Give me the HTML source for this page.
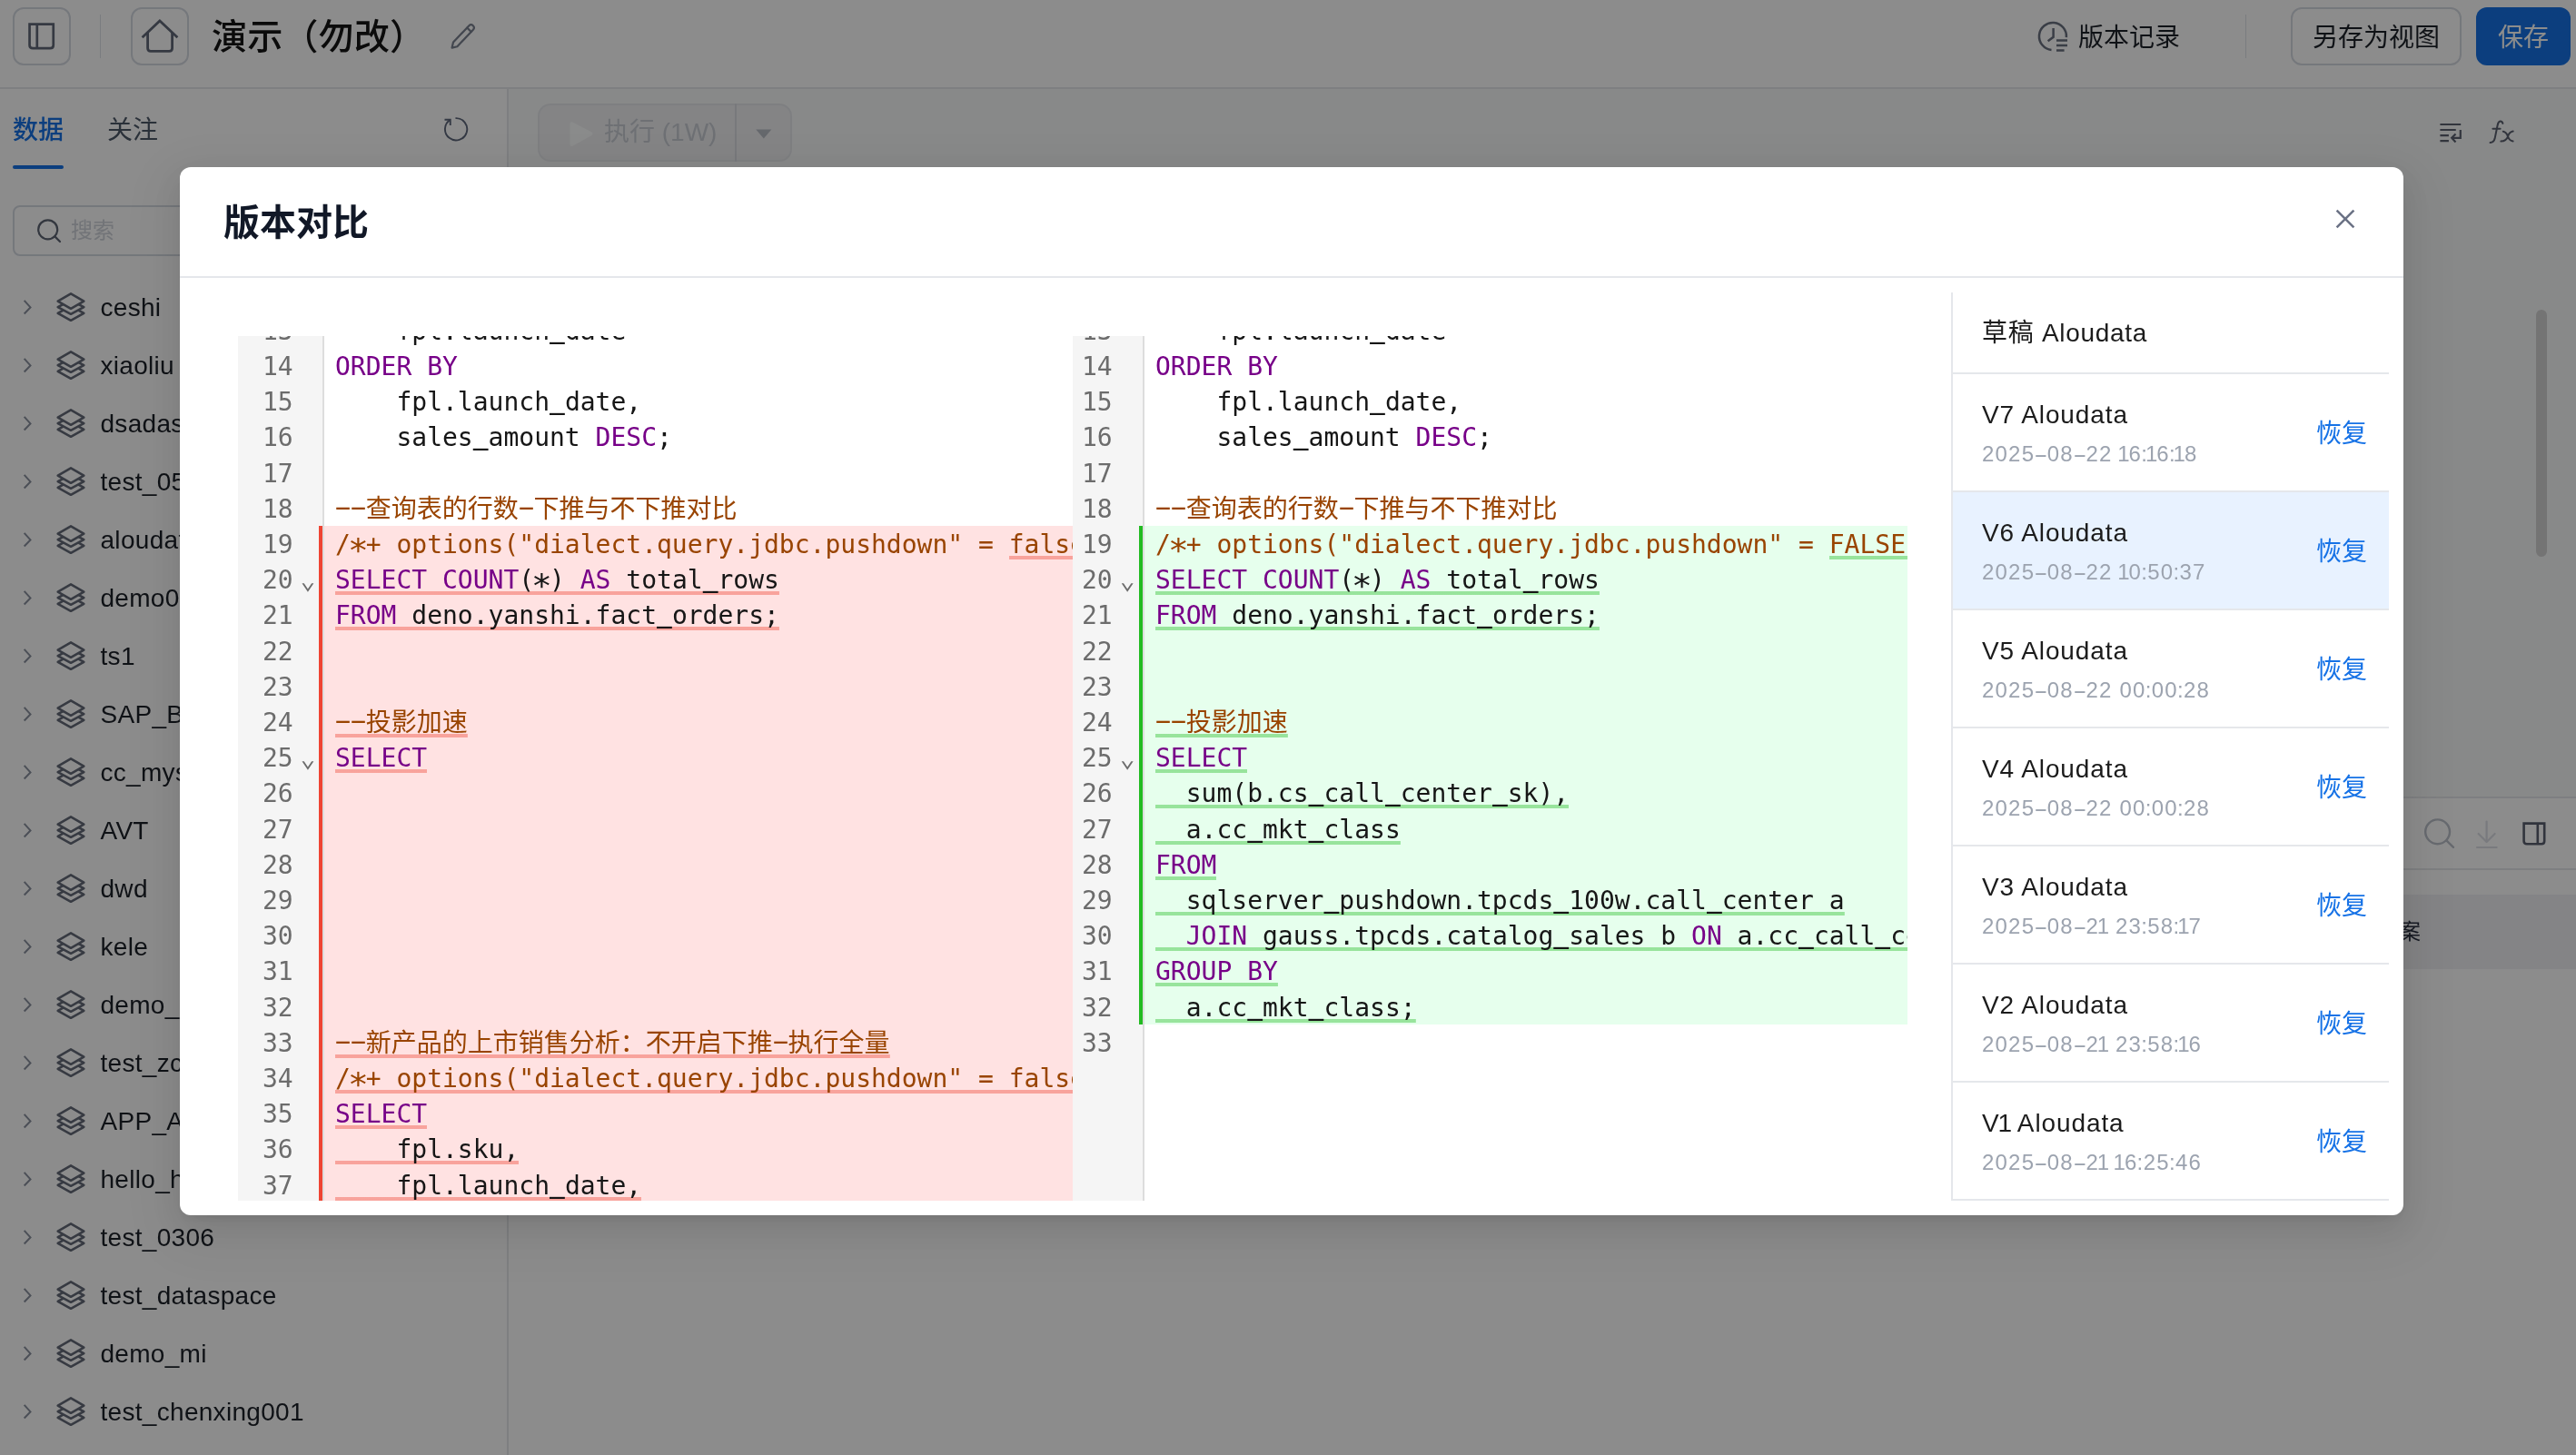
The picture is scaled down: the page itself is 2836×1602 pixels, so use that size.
<!DOCTYPE html>
<html lang="zh-CN">
<head>
<meta charset="utf-8">
<title>版本对比</title>
<style>
*{box-sizing:border-box;margin:0;padding:0}
html,body{width:2836px;height:1602px;overflow:hidden;background:#fff}
body{position:relative;will-change:transform;font-family:"Liberation Sans","Noto Sans CJK SC",sans-serif;color:#1d2129;font-size:28px}
.abs{position:absolute}
svg{display:block;overflow:visible}
/* ---------- app behind mask ---------- */
#hdr{position:absolute;left:0;top:0;width:2836px;height:98px;border-bottom:2px solid #e5e7ec;background:#fff}
.ibtn{position:absolute;top:8px;width:64px;height:64px;border:2px solid #d6dae2;border-radius:12px}
.vdiv{position:absolute;top:16px;width:1px;height:48px;background:#dfe2e8}
#title{position:absolute;left:233px;top:11px;line-height:60px;font-size:39.2px;font-weight:500;color:#151515;white-space:nowrap}
#verrec{position:absolute;left:2288px;top:22px;line-height:40px;font-size:28px;color:#1d2129;white-space:nowrap}
.btn{position:absolute;top:8px;height:64px;border-radius:12px;font-size:28px;line-height:64px;text-align:center;white-space:nowrap}
#saveas{left:2522px;width:188px;border:2px solid #d6dae2;color:#1d2129}
#save{left:2726px;width:104px;background:#1672e6;color:#fff;line-height:68px}
#side{position:absolute;left:0;top:98px;width:560px;height:1504px;border-right:2px solid #e5e7ec}
.tab{position:absolute;top:124px;line-height:40px;font-size:28px;white-space:nowrap}
#tab1{left:14px;color:#1672e6;font-weight:500}
#tab2{left:118px;color:#4e5969}
#tabline{position:absolute;left:14px;top:182px;width:56px;height:4px;border-radius:2px;background:#1672e6}
#search{position:absolute;left:14px;top:226px;width:530px;height:56px;border:2px solid #d6dae2;border-radius:8px}
#search span{position:absolute;left:62px;top:6px;line-height:40px;font-size:24px;color:#cfd3da}
.trow{position:absolute;left:0;width:556px;height:64px;white-space:nowrap}
.trow span{position:absolute;left:110.5px;top:12px;line-height:40px;font-size:28px;color:#1d2129;letter-spacing:0.3px}
.chev{position:absolute;left:24.4px;top:23px;width:12px;height:18px;fill:none;stroke:#8a919f;stroke-width:2;stroke-linecap:butt;stroke-linejoin:miter}
.lay{position:absolute;left:60px;top:14px;width:36px;height:36px;fill:#fff;stroke:#646b79;stroke-width:2.6;stroke-linejoin:round}
#exec{position:absolute;left:592px;top:114px;width:280px;height:64px;border:2px solid #e6e8ec;border-radius:14px;background:#f0f1f3}
#exec .sp{position:absolute;left:215px;top:-2px;width:2px;height:64px;background:#dadde2}
#exec span{position:absolute;left:71px;top:10px;line-height:40px;font-size:28px;color:#c9cdd4;white-space:nowrap;letter-spacing:0}
.hl{position:absolute;left:2560px;width:276px;height:2px;background:#e5e7ec}
#thead{position:absolute;left:2560px;top:985px;width:276px;height:82px;background:#f0f1f4}
#thead span{position:absolute;left:81px;top:21px;line-height:40px;font-size:24px;color:#2a3040}
#sthumb{position:absolute;left:2792px;top:341px;width:12px;height:272px;border-radius:6px;background:#d4d4d4}
/* ---------- mask + modal ---------- */
#mask{position:absolute;left:0;top:0;width:2836px;height:1602px;background:rgba(0,0,0,.45)}
#modal{position:absolute;left:198px;top:184px;width:2448px;height:1154px;border-radius:12px;background:#fff;
 box-shadow:0 12px 32px 0 rgba(0,0,0,.08),0 6px 12px -8px rgba(0,0,0,.12),0 18px 56px 16px rgba(0,0,0,.05)}
#mtitle{position:absolute;left:48px;top:31px;line-height:60px;font-size:40px;font-weight:700;color:#111827;white-space:nowrap}
#mhr{position:absolute;left:0;top:120px;width:2448px;height:2px;background:#e5e7eb}
/* editors: coordinates inside are relative to the editor box; the editor box is placed in body coords */
.ed{position:absolute;top:370px;width:919px;height:952px;overflow:hidden;background:#fff;
 font-family:"DejaVu Sans Mono","Noto Sans CJK SC",monospace;font-size:28px;line-height:39.2px;color:#161616}
.gut{position:absolute;left:0;top:0;height:952px;background:#f5f5f5;border-right:2px solid #ddd;box-sizing:content-box}
.ln{position:absolute;left:0;height:39.2px;text-align:right;color:#6c6c6c;white-space:pre}
.fold{position:absolute;height:39.2px;color:#6c6c6c;white-space:pre}
.mark{position:absolute;width:4px}
.chg{position:absolute;width:900px}
.cl{position:absolute;height:39.2px;padding-left:12px;white-space:pre}
.edl .mark{background:#ee4433}
.edr .mark{background:#22bb22}
.edl .chg{background:#ffe2e2}
.edr .chg{background:#e6ffed}
.cl i{font-style:normal;display:inline-block}
.hy{transform:translateY(-2.2px) scaleX(2.05)}
.as{transform:translateY(6.6px) scale(1.35,1.25)}
.us{transform-origin:50% 100%;transform:translateY(2.2px) scaleY(2)}
.k{color:#770088}
.c{color:#994400}
.edl .u{background:linear-gradient(rgba(238,68,51,.4),rgba(238,68,51,.4)) bottom/100% 4px no-repeat}
.edr .u{background:linear-gradient(rgba(34,187,34,.4),rgba(34,187,34,.4)) bottom/100% 4px no-repeat}
/* version list */
#vl{position:absolute;left:2148px;top:322px;width:482px;height:1000px;border-left:2px solid #e5e7eb}
.vrow{position:absolute;left:0;width:480px;height:130px;border-bottom:2px solid #e5e7eb}
.vrow.draft{height:90px}
.vrow.sel{background:#e8f2ff}
.vt{position:absolute;left:32px;top:23px;line-height:44px;font-size:28px;color:#1c1c1c;white-space:nowrap;letter-spacing:0.9px}
.vd{position:absolute;left:32px;top:68px;line-height:40px;font-size:24px;color:#9ca3af;white-space:nowrap;letter-spacing:1.2px}
.vd i{display:inline-block;width:13.6px;text-align:center;transform:scaleX(1.9);font-style:normal;letter-spacing:0}
.vd u{text-decoration:none;margin:0 -2.3px}
.vd s{text-decoration:none;margin:0 -0.85px}
.vt u{text-decoration:none;margin:0 -2.2px}
.vr{position:absolute;left:400px;top:44px;line-height:44px;font-size:28px;color:#1672e6;white-space:nowrap}
</style>
</head>
<body>
<!-- ================= header ================= -->
<div id="hdr">
  <div class="ibtn" style="left:14px"><svg class="abs" style="left:14px;top:14px" width="32" height="32" viewBox="0 0 32 32" fill="none" stroke="#626978" stroke-width="2.7"><path d="M2.55 2.65 H28.75 V25.65 Q28.75 29.15 25.25 29.15 H6.05 Q2.55 29.15 2.55 25.65 Z"/><path d="M10.8 2.65 V29.15"/></svg></div>
  <div class="vdiv" style="left:110px"></div>
  <div class="ibtn" style="left:144px"><svg class="abs" style="left:8px;top:8px" width="44" height="44" viewBox="0 0 44 44" fill="none" stroke="#626978" stroke-width="2.8" stroke-linejoin="miter"><path d="M2.6 23.2 L21.9 5 L41.4 23.2"/><path d="M8.6 18 V35.1 Q8.6 38.4 11.9 38.4 H32.3 Q35.6 38.4 35.6 35.1 V18"/></svg></div>
  <div id="title">演示（勿改）</div>
  <svg class="abs" style="left:494px;top:24px" width="32" height="32" viewBox="0 0 32 32" fill="none" stroke="#7a8190" stroke-width="2.2" stroke-linejoin="round" stroke-linecap="round"><path d="M3.6 28.6 L5 22.6 L22.4 4.2 Q24.6 2 26.8 4.2 Q29 6.4 26.9 8.7 L9.4 27.2 Z"/><path d="M20.3 6.6 L24.7 11"/></svg>
  <svg class="abs" style="left:2242px;top:22px" width="36" height="36" viewBox="0 0 36 36" fill="none" stroke="#6a7180" stroke-width="2.5" stroke-linecap="butt"><path d="M32.9 19.2 A15 15 0 1 0 16.5 32.9"/><path d="M18.6 9 V18.8 L12.6 23.2"/><path d="M22 22.6 H34 M22 28 H34 M22 33.4 H30.6"/></svg>
  <div id="verrec">版本记录</div>
  <div class="vdiv" style="left:2472px"></div>
  <div class="btn" id="saveas">另存为视图</div>
  <div class="btn" id="save">保存</div>
</div>
<!-- ================= sidebar ================= -->
<div id="side"></div>
<div class="tab" id="tab1">数据</div>
<div class="tab" id="tab2">关注</div>
<div id="tabline"></div>
<svg class="abs" style="left:486px;top:126px" width="32" height="32" viewBox="0 0 32 32" fill="none" stroke="#5f687c" stroke-width="1.9" stroke-linecap="butt" stroke-linejoin="miter"><path d="M15.46 4.12 A12.15 12.15 0 1 1 9.75 5.89"/><path d="M3.5 5.75 H9.75 V12"/></svg>
<div id="search"><svg class="abs" style="left:24px;top:12px" width="30" height="30" viewBox="0 0 30 30" fill="none" stroke="#5d6473" stroke-width="2.2" stroke-linecap="round"><circle cx="12.7" cy="12.8" r="10.5"/><path d="M20.4 20.4 L26 26"/></svg><span>搜索</span></div>
<div class="trow" style="top:306.5px"><svg class="chev" viewBox="0 0 12 18"><path d="M2.7 0.8 L9.5 8.4 L2.7 15.5"/></svg><svg class="lay" viewBox="0 0 36 36"><path d="M18 15.9 L32.3 23.9 L18 31.8 L3.7 23.9Z"/><path d="M18 9.6 L32.3 17.2 L18 24.8 L3.7 17.2Z"/><path d="M18 2.3 L32.3 10.6 L18 18.8 L3.7 10.6Z"/></svg><span>ceshi</span></div>
<div class="trow" style="top:370.5px"><svg class="chev" viewBox="0 0 12 18"><path d="M2.7 0.8 L9.5 8.4 L2.7 15.5"/></svg><svg class="lay" viewBox="0 0 36 36"><path d="M18 15.9 L32.3 23.9 L18 31.8 L3.7 23.9Z"/><path d="M18 9.6 L32.3 17.2 L18 24.8 L3.7 17.2Z"/><path d="M18 2.3 L32.3 10.6 L18 18.8 L3.7 10.6Z"/></svg><span>xiaoliu</span></div>
<div class="trow" style="top:434.5px"><svg class="chev" viewBox="0 0 12 18"><path d="M2.7 0.8 L9.5 8.4 L2.7 15.5"/></svg><svg class="lay" viewBox="0 0 36 36"><path d="M18 15.9 L32.3 23.9 L18 31.8 L3.7 23.9Z"/><path d="M18 9.6 L32.3 17.2 L18 24.8 L3.7 17.2Z"/><path d="M18 2.3 L32.3 10.6 L18 18.8 L3.7 10.6Z"/></svg><span>dsadas</span></div>
<div class="trow" style="top:498.5px"><svg class="chev" viewBox="0 0 12 18"><path d="M2.7 0.8 L9.5 8.4 L2.7 15.5"/></svg><svg class="lay" viewBox="0 0 36 36"><path d="M18 15.9 L32.3 23.9 L18 31.8 L3.7 23.9Z"/><path d="M18 9.6 L32.3 17.2 L18 24.8 L3.7 17.2Z"/><path d="M18 2.3 L32.3 10.6 L18 18.8 L3.7 10.6Z"/></svg><span>test_0508</span></div>
<div class="trow" style="top:562.5px"><svg class="chev" viewBox="0 0 12 18"><path d="M2.7 0.8 L9.5 8.4 L2.7 15.5"/></svg><svg class="lay" viewBox="0 0 36 36"><path d="M18 15.9 L32.3 23.9 L18 31.8 L3.7 23.9Z"/><path d="M18 9.6 L32.3 17.2 L18 24.8 L3.7 17.2Z"/><path d="M18 2.3 L32.3 10.6 L18 18.8 L3.7 10.6Z"/></svg><span>aloudata</span></div>
<div class="trow" style="top:626.5px"><svg class="chev" viewBox="0 0 12 18"><path d="M2.7 0.8 L9.5 8.4 L2.7 15.5"/></svg><svg class="lay" viewBox="0 0 36 36"><path d="M18 15.9 L32.3 23.9 L18 31.8 L3.7 23.9Z"/><path d="M18 9.6 L32.3 17.2 L18 24.8 L3.7 17.2Z"/><path d="M18 2.3 L32.3 10.6 L18 18.8 L3.7 10.6Z"/></svg><span>demo01</span></div>
<div class="trow" style="top:690.5px"><svg class="chev" viewBox="0 0 12 18"><path d="M2.7 0.8 L9.5 8.4 L2.7 15.5"/></svg><svg class="lay" viewBox="0 0 36 36"><path d="M18 15.9 L32.3 23.9 L18 31.8 L3.7 23.9Z"/><path d="M18 9.6 L32.3 17.2 L18 24.8 L3.7 17.2Z"/><path d="M18 2.3 L32.3 10.6 L18 18.8 L3.7 10.6Z"/></svg><span>ts1</span></div>
<div class="trow" style="top:754.5px"><svg class="chev" viewBox="0 0 12 18"><path d="M2.7 0.8 L9.5 8.4 L2.7 15.5"/></svg><svg class="lay" viewBox="0 0 36 36"><path d="M18 15.9 L32.3 23.9 L18 31.8 L3.7 23.9Z"/><path d="M18 9.6 L32.3 17.2 L18 24.8 L3.7 17.2Z"/><path d="M18 2.3 L32.3 10.6 L18 18.8 L3.7 10.6Z"/></svg><span>SAP_BW</span></div>
<div class="trow" style="top:818.5px"><svg class="chev" viewBox="0 0 12 18"><path d="M2.7 0.8 L9.5 8.4 L2.7 15.5"/></svg><svg class="lay" viewBox="0 0 36 36"><path d="M18 15.9 L32.3 23.9 L18 31.8 L3.7 23.9Z"/><path d="M18 9.6 L32.3 17.2 L18 24.8 L3.7 17.2Z"/><path d="M18 2.3 L32.3 10.6 L18 18.8 L3.7 10.6Z"/></svg><span>cc_mysql</span></div>
<div class="trow" style="top:882.5px"><svg class="chev" viewBox="0 0 12 18"><path d="M2.7 0.8 L9.5 8.4 L2.7 15.5"/></svg><svg class="lay" viewBox="0 0 36 36"><path d="M18 15.9 L32.3 23.9 L18 31.8 L3.7 23.9Z"/><path d="M18 9.6 L32.3 17.2 L18 24.8 L3.7 17.2Z"/><path d="M18 2.3 L32.3 10.6 L18 18.8 L3.7 10.6Z"/></svg><span>AVT</span></div>
<div class="trow" style="top:946.5px"><svg class="chev" viewBox="0 0 12 18"><path d="M2.7 0.8 L9.5 8.4 L2.7 15.5"/></svg><svg class="lay" viewBox="0 0 36 36"><path d="M18 15.9 L32.3 23.9 L18 31.8 L3.7 23.9Z"/><path d="M18 9.6 L32.3 17.2 L18 24.8 L3.7 17.2Z"/><path d="M18 2.3 L32.3 10.6 L18 18.8 L3.7 10.6Z"/></svg><span>dwd</span></div>
<div class="trow" style="top:1010.5px"><svg class="chev" viewBox="0 0 12 18"><path d="M2.7 0.8 L9.5 8.4 L2.7 15.5"/></svg><svg class="lay" viewBox="0 0 36 36"><path d="M18 15.9 L32.3 23.9 L18 31.8 L3.7 23.9Z"/><path d="M18 9.6 L32.3 17.2 L18 24.8 L3.7 17.2Z"/><path d="M18 2.3 L32.3 10.6 L18 18.8 L3.7 10.6Z"/></svg><span>kele</span></div>
<div class="trow" style="top:1074.5px"><svg class="chev" viewBox="0 0 12 18"><path d="M2.7 0.8 L9.5 8.4 L2.7 15.5"/></svg><svg class="lay" viewBox="0 0 36 36"><path d="M18 15.9 L32.3 23.9 L18 31.8 L3.7 23.9Z"/><path d="M18 9.6 L32.3 17.2 L18 24.8 L3.7 17.2Z"/><path d="M18 2.3 L32.3 10.6 L18 18.8 L3.7 10.6Z"/></svg><span>demo_data</span></div>
<div class="trow" style="top:1138.5px"><svg class="chev" viewBox="0 0 12 18"><path d="M2.7 0.8 L9.5 8.4 L2.7 15.5"/></svg><svg class="lay" viewBox="0 0 36 36"><path d="M18 15.9 L32.3 23.9 L18 31.8 L3.7 23.9Z"/><path d="M18 9.6 L32.3 17.2 L18 24.8 L3.7 17.2Z"/><path d="M18 2.3 L32.3 10.6 L18 18.8 L3.7 10.6Z"/></svg><span>test_zc</span></div>
<div class="trow" style="top:1202.5px"><svg class="chev" viewBox="0 0 12 18"><path d="M2.7 0.8 L9.5 8.4 L2.7 15.5"/></svg><svg class="lay" viewBox="0 0 36 36"><path d="M18 15.9 L32.3 23.9 L18 31.8 L3.7 23.9Z"/><path d="M18 9.6 L32.3 17.2 L18 24.8 L3.7 17.2Z"/><path d="M18 2.3 L32.3 10.6 L18 18.8 L3.7 10.6Z"/></svg><span>APP_ADS</span></div>
<div class="trow" style="top:1266.5px"><svg class="chev" viewBox="0 0 12 18"><path d="M2.7 0.8 L9.5 8.4 L2.7 15.5"/></svg><svg class="lay" viewBox="0 0 36 36"><path d="M18 15.9 L32.3 23.9 L18 31.8 L3.7 23.9Z"/><path d="M18 9.6 L32.3 17.2 L18 24.8 L3.7 17.2Z"/><path d="M18 2.3 L32.3 10.6 L18 18.8 L3.7 10.6Z"/></svg><span>hello_hive</span></div>
<div class="trow" style="top:1330.5px"><svg class="chev" viewBox="0 0 12 18"><path d="M2.7 0.8 L9.5 8.4 L2.7 15.5"/></svg><svg class="lay" viewBox="0 0 36 36"><path d="M18 15.9 L32.3 23.9 L18 31.8 L3.7 23.9Z"/><path d="M18 9.6 L32.3 17.2 L18 24.8 L3.7 17.2Z"/><path d="M18 2.3 L32.3 10.6 L18 18.8 L3.7 10.6Z"/></svg><span>test_0306</span></div>
<div class="trow" style="top:1394.5px"><svg class="chev" viewBox="0 0 12 18"><path d="M2.7 0.8 L9.5 8.4 L2.7 15.5"/></svg><svg class="lay" viewBox="0 0 36 36"><path d="M18 15.9 L32.3 23.9 L18 31.8 L3.7 23.9Z"/><path d="M18 9.6 L32.3 17.2 L18 24.8 L3.7 17.2Z"/><path d="M18 2.3 L32.3 10.6 L18 18.8 L3.7 10.6Z"/></svg><span>test_dataspace</span></div>
<div class="trow" style="top:1458.5px"><svg class="chev" viewBox="0 0 12 18"><path d="M2.7 0.8 L9.5 8.4 L2.7 15.5"/></svg><svg class="lay" viewBox="0 0 36 36"><path d="M18 15.9 L32.3 23.9 L18 31.8 L3.7 23.9Z"/><path d="M18 9.6 L32.3 17.2 L18 24.8 L3.7 17.2Z"/><path d="M18 2.3 L32.3 10.6 L18 18.8 L3.7 10.6Z"/></svg><span>demo_mi</span></div>
<div class="trow" style="top:1522.5px"><svg class="chev" viewBox="0 0 12 18"><path d="M2.7 0.8 L9.5 8.4 L2.7 15.5"/></svg><svg class="lay" viewBox="0 0 36 36"><path d="M18 15.9 L32.3 23.9 L18 31.8 L3.7 23.9Z"/><path d="M18 9.6 L32.3 17.2 L18 24.8 L3.7 17.2Z"/><path d="M18 2.3 L32.3 10.6 L18 18.8 L3.7 10.6Z"/></svg><span>test_chenxing001</span></div>
<!-- ================= main area ================= -->
<div class="abs" style="left:560px;top:98px;width:2276px;height:1504px;background:#f8f9fa"></div>
<div id="exec"><svg class="abs" style="left:32px;top:17px" width="28" height="30" viewBox="0 0 28 30"><path d="M3.5 3.2 L24.5 14.2 L3.5 26 Z" fill="#fcfdfd" stroke="#fcfdfd" stroke-width="4" stroke-linejoin="round"/></svg><span>执行 (1W)</span><div class="sp"></div><svg class="abs" style="left:237px;top:26px" width="20" height="12" viewBox="0 0 20 12"><path d="M1.2 0.6 H18.4 L9.8 10.4 Z" fill="#b9bdc5"/></svg></div>
<svg class="abs" style="left:2684px;top:132px" width="28" height="28" viewBox="0 0 28 28" fill="none" stroke="#5b6170" stroke-width="2.2"><path d="M2.4 5 H25.2 M2.4 11 H19.75 M2.4 17.1 H11.9 M2.4 23.1 H11.9"/><path d="M24.8 10.9 V19.85 H15.4"/><path d="M19.5 15.5 L15.2 19.85 L19.5 24.5"/></svg>
<svg class="abs" style="left:2738px;top:130px" width="32" height="32" viewBox="0 0 32 32" fill="none" stroke="#5b6170" stroke-width="2" stroke-linecap="round"><path d="M17.4 5.9 Q16.6 3.4 14.6 3.6 Q12.4 4 11.6 8 L8.6 22.6 Q7.6 26.8 3.6 27.1"/><path d="M6.4 11.8 H14.6"/><path d="M17.8 14.8 Q21.5 15.5 23 20.3 Q24.6 25 28.6 25.4"/><path d="M28.7 14.6 Q24.6 15.2 23 20.3 Q21.2 25.2 15.4 25.6"/></svg>
<div class="abs" style="left:560px;top:877px;width:2276px;height:725px;background:#fff;border-top:2px solid #e5e7ec"></div>
<svg class="abs" style="left:2668px;top:900px" width="36" height="36" viewBox="0 0 36 36" fill="none" stroke="#bcc1cb" stroke-width="2.4" stroke-linecap="round"><circle cx="15.6" cy="15.8" r="13.4"/><path d="M25.6 25.6 L33 32.8"/></svg>
<svg class="abs" style="left:2724px;top:902px" width="28" height="34" viewBox="0 0 28 34" fill="none" stroke="#dcdfe5" stroke-width="2.2" stroke-linecap="round" stroke-linejoin="round"><path d="M13.6 2.6 V24.6"/><path d="M4.6 16 L13.6 25 L22.6 16"/><path d="M3 31 H24.6"/></svg>
<svg class="abs" style="left:2776px;top:904px" width="28" height="28" viewBox="0 0 28 28" fill="none" stroke="#596070" stroke-width="2.6"><path d="M2.6 2.6 H25.2 V22 Q25.2 25.2 22 25.2 H5.8 Q2.6 25.2 2.6 22 Z"/><path d="M17.8 2.6 V25.2"/></svg>
<div class="hl" style="top:956px"></div>
<div id="thead"><span>案</span></div>
<div id="sthumb"></div>
<!-- ================= mask ================= -->
<div id="mask"></div>
<!-- ================= modal ================= -->
<div id="modal">
  <div id="mtitle">版本对比</div>
  <svg class="abs" style="left:2370px;top:43px" width="28" height="28" viewBox="0 0 28 28" fill="none" stroke="#6b7285" stroke-width="2.6"><path d="M4.6 4.6 L23.4 23.4 M23.4 4.6 L4.6 23.4"/></svg>
  <div id="mhr"></div>
</div>
<div class="ed edl" style="left:262px">
<div class="gut" style="width:93px"></div>
<div class="mark" style="left:89px;top:209.0px;height:744.8px"></div>
<div class="chg" style="left:95px;top:209.0px;height:744.8px"></div>
<div class="ln" style="top:-25.2px;width:60.60px">13</div>
<div class="cl" style="top:-25.2px;left:95px">    fpl.launch<i class="us">_</i>date</div>
<div class="ln" style="top:14.0px;width:60.60px">14</div>
<div class="cl" style="top:14.0px;left:95px"><span class="k">ORDER</span> <span class="k">BY</span></div>
<div class="ln" style="top:53.2px;width:60.60px">15</div>
<div class="cl" style="top:53.2px;left:95px">    fpl.launch<i class="us">_</i>date,</div>
<div class="ln" style="top:92.4px;width:60.60px">16</div>
<div class="cl" style="top:92.4px;left:95px">    sales<i class="us">_</i>amount <span class="k">DESC</span>;</div>
<div class="ln" style="top:131.6px;width:60.60px">17</div>
<div class="ln" style="top:170.8px;width:60.60px">18</div>
<div class="cl" style="top:170.8px;left:95px"><span class="c"><i class="hy">-</i><i class="hy">-</i>查询表的行数<i class="hy">-</i>下推与不下推对比</span></div>
<div class="ln" style="top:210.0px;width:60.60px">19</div>
<div class="cl" style="top:210.0px;left:95px"><span class="c">/<i class="as">*</i>+ options("dialect.query.jdbc.pushdown" = <span class="u">false) <i class="as">*</i>/</span></span></div>
<div class="ln" style="top:249.2px;width:60.60px">20</div>
<div class="fold" style="top:249.2px;left:68.6px">⌄</div>
<div class="cl" style="top:249.2px;left:95px"><span class="u"><span class="k">SELECT</span> <span class="k">COUNT</span>(<i class="as">*</i>) <span class="k">AS</span> total<i class="us">_</i>rows</span></div>
<div class="ln" style="top:288.4px;width:60.60px">21</div>
<div class="cl" style="top:288.4px;left:95px"><span class="u"><span class="k">FROM</span> deno.yanshi.fact<i class="us">_</i>orders;</span></div>
<div class="ln" style="top:327.6px;width:60.60px">22</div>
<div class="ln" style="top:366.8px;width:60.60px">23</div>
<div class="ln" style="top:406.0px;width:60.60px">24</div>
<div class="cl" style="top:406.0px;left:95px"><span class="u"><span class="c"><i class="hy">-</i><i class="hy">-</i>投影加速</span></span></div>
<div class="ln" style="top:445.2px;width:60.60px">25</div>
<div class="fold" style="top:445.2px;left:68.6px">⌄</div>
<div class="cl" style="top:445.2px;left:95px"><span class="u"><span class="k">SELECT</span></span></div>
<div class="ln" style="top:484.4px;width:60.60px">26</div>
<div class="ln" style="top:523.6px;width:60.60px">27</div>
<div class="ln" style="top:562.8px;width:60.60px">28</div>
<div class="ln" style="top:602.0px;width:60.60px">29</div>
<div class="ln" style="top:641.2px;width:60.60px">30</div>
<div class="ln" style="top:680.4px;width:60.60px">31</div>
<div class="ln" style="top:719.6px;width:60.60px">32</div>
<div class="ln" style="top:758.8px;width:60.60px">33</div>
<div class="cl" style="top:758.8px;left:95px"><span class="u"><span class="c"><i class="hy">-</i><i class="hy">-</i>新产品的上市销售分析：不开启下推<i class="hy">-</i>执行全量</span></span></div>
<div class="ln" style="top:798.0px;width:60.60px">34</div>
<div class="cl" style="top:798.0px;left:95px"><span class="u"><span class="c">/<i class="as">*</i>+ options("dialect.query.jdbc.pushdown" = false) <i class="as">*</i>/</span></span></div>
<div class="ln" style="top:837.2px;width:60.60px">35</div>
<div class="cl" style="top:837.2px;left:95px"><span class="u"><span class="k">SELECT</span></span></div>
<div class="ln" style="top:876.4px;width:60.60px">36</div>
<div class="cl" style="top:876.4px;left:95px"><span class="u">    fpl.sku,</span></div>
<div class="ln" style="top:915.6px;width:60.60px">37</div>
<div class="cl" style="top:915.6px;left:95px"><span class="u">    fpl.launch<i class="us">_</i>date,</span></div>
</div>
<div class="ed edr" style="left:1181px">
<div class="gut" style="width:77px"></div>
<div class="mark" style="left:73px;top:209.0px;height:548.8px"></div>
<div class="chg" style="left:79px;top:209.0px;height:548.8px"></div>
<div class="ln" style="top:-25.2px;width:43.70px">13</div>
<div class="cl" style="top:-25.2px;left:79px">    fpl.launch<i class="us">_</i>date</div>
<div class="ln" style="top:14.0px;width:43.70px">14</div>
<div class="cl" style="top:14.0px;left:79px"><span class="k">ORDER</span> <span class="k">BY</span></div>
<div class="ln" style="top:53.2px;width:43.70px">15</div>
<div class="cl" style="top:53.2px;left:79px">    fpl.launch<i class="us">_</i>date,</div>
<div class="ln" style="top:92.4px;width:43.70px">16</div>
<div class="cl" style="top:92.4px;left:79px">    sales<i class="us">_</i>amount <span class="k">DESC</span>;</div>
<div class="ln" style="top:131.6px;width:43.70px">17</div>
<div class="ln" style="top:170.8px;width:43.70px">18</div>
<div class="cl" style="top:170.8px;left:79px"><span class="c"><i class="hy">-</i><i class="hy">-</i>查询表的行数<i class="hy">-</i>下推与不下推对比</span></div>
<div class="ln" style="top:210.0px;width:43.70px">19</div>
<div class="cl" style="top:210.0px;left:79px"><span class="c">/<i class="as">*</i>+ options("dialect.query.jdbc.pushdown" = <span class="u">FALSE) <i class="as">*</i>/</span></span></div>
<div class="ln" style="top:249.2px;width:43.70px">20</div>
<div class="fold" style="top:249.2px;left:51.7px">⌄</div>
<div class="cl" style="top:249.2px;left:79px"><span class="u"><span class="k">SELECT</span> <span class="k">COUNT</span>(<i class="as">*</i>) <span class="k">AS</span> total<i class="us">_</i>rows</span></div>
<div class="ln" style="top:288.4px;width:43.70px">21</div>
<div class="cl" style="top:288.4px;left:79px"><span class="u"><span class="k">FROM</span> deno.yanshi.fact<i class="us">_</i>orders;</span></div>
<div class="ln" style="top:327.6px;width:43.70px">22</div>
<div class="ln" style="top:366.8px;width:43.70px">23</div>
<div class="ln" style="top:406.0px;width:43.70px">24</div>
<div class="cl" style="top:406.0px;left:79px"><span class="u"><span class="c"><i class="hy">-</i><i class="hy">-</i>投影加速</span></span></div>
<div class="ln" style="top:445.2px;width:43.70px">25</div>
<div class="fold" style="top:445.2px;left:51.7px">⌄</div>
<div class="cl" style="top:445.2px;left:79px"><span class="u"><span class="k">SELECT</span></span></div>
<div class="ln" style="top:484.4px;width:43.70px">26</div>
<div class="cl" style="top:484.4px;left:79px"><span class="u">  sum(b.cs<i class="us">_</i>call<i class="us">_</i>center<i class="us">_</i>sk),</span></div>
<div class="ln" style="top:523.6px;width:43.70px">27</div>
<div class="cl" style="top:523.6px;left:79px"><span class="u">  a.cc<i class="us">_</i>mkt<i class="us">_</i>class</span></div>
<div class="ln" style="top:562.8px;width:43.70px">28</div>
<div class="cl" style="top:562.8px;left:79px"><span class="u"><span class="k">FROM</span></span></div>
<div class="ln" style="top:602.0px;width:43.70px">29</div>
<div class="cl" style="top:602.0px;left:79px"><span class="u">  sqlserver<i class="us">_</i>pushdown.tpcds<i class="us">_</i>100w.call<i class="us">_</i>center a</span></div>
<div class="ln" style="top:641.2px;width:43.70px">30</div>
<div class="cl" style="top:641.2px;left:79px"><span class="u">  <span class="k">JOIN</span> gauss.tpcds.catalog<i class="us">_</i>sales b <span class="k">ON</span> a.cc<i class="us">_</i>call<i class="us">_</i>center<i class="us">_</i>sk = b.cs<i class="us">_</i>call<i class="us">_</i>center<i class="us">_</i>sk</span></div>
<div class="ln" style="top:680.4px;width:43.70px">31</div>
<div class="cl" style="top:680.4px;left:79px"><span class="u"><span class="k">GROUP</span> <span class="k">BY</span></span></div>
<div class="ln" style="top:719.6px;width:43.70px">32</div>
<div class="cl" style="top:719.6px;left:79px"><span class="u">  a.cc<i class="us">_</i>mkt<i class="us">_</i>class;</span></div>
<div class="ln" style="top:758.8px;width:43.70px">33</div>
</div>
<div id="vl">
<div class="vrow draft" style="top:0"><div class="vt" style="top:23px;letter-spacing:0.7px">草稿 Aloudata</div></div>
<div class="vrow" style="top:90px"><div class="vt">V7 Aloudata</div><div class="vd">2025<i>-</i>08<i>-</i>22 <u>1</u>6<s>:</s><u>1</u>6<s>:</s><u>1</u>8</div><div class="vr">恢复</div></div>
<div class="vrow sel" style="top:220px"><div class="vt">V6 Aloudata</div><div class="vd">2025<i>-</i>08<i>-</i>22 <u>1</u>0<s>:</s>50<s>:</s>37</div><div class="vr">恢复</div></div>
<div class="vrow" style="top:350px"><div class="vt">V5 Aloudata</div><div class="vd">2025<i>-</i>08<i>-</i>22 00<s>:</s>00<s>:</s>28</div><div class="vr">恢复</div></div>
<div class="vrow" style="top:480px"><div class="vt">V4 Aloudata</div><div class="vd">2025<i>-</i>08<i>-</i>22 00<s>:</s>00<s>:</s>28</div><div class="vr">恢复</div></div>
<div class="vrow" style="top:610px"><div class="vt">V3 Aloudata</div><div class="vd">2025<i>-</i>08<i>-</i>2<u>1</u> 23<s>:</s>58<s>:</s><u>1</u>7</div><div class="vr">恢复</div></div>
<div class="vrow" style="top:740px"><div class="vt">V2 Aloudata</div><div class="vd">2025<i>-</i>08<i>-</i>2<u>1</u> 23<s>:</s>58<s>:</s><u>1</u>6</div><div class="vr">恢复</div></div>
<div class="vrow" style="top:870px"><div class="vt">V<u>1</u> Aloudata</div><div class="vd">2025<i>-</i>08<i>-</i>2<u>1</u> <u>1</u>6<s>:</s>25<s>:</s>46</div><div class="vr">恢复</div></div>
</div>
</body>
</html>
